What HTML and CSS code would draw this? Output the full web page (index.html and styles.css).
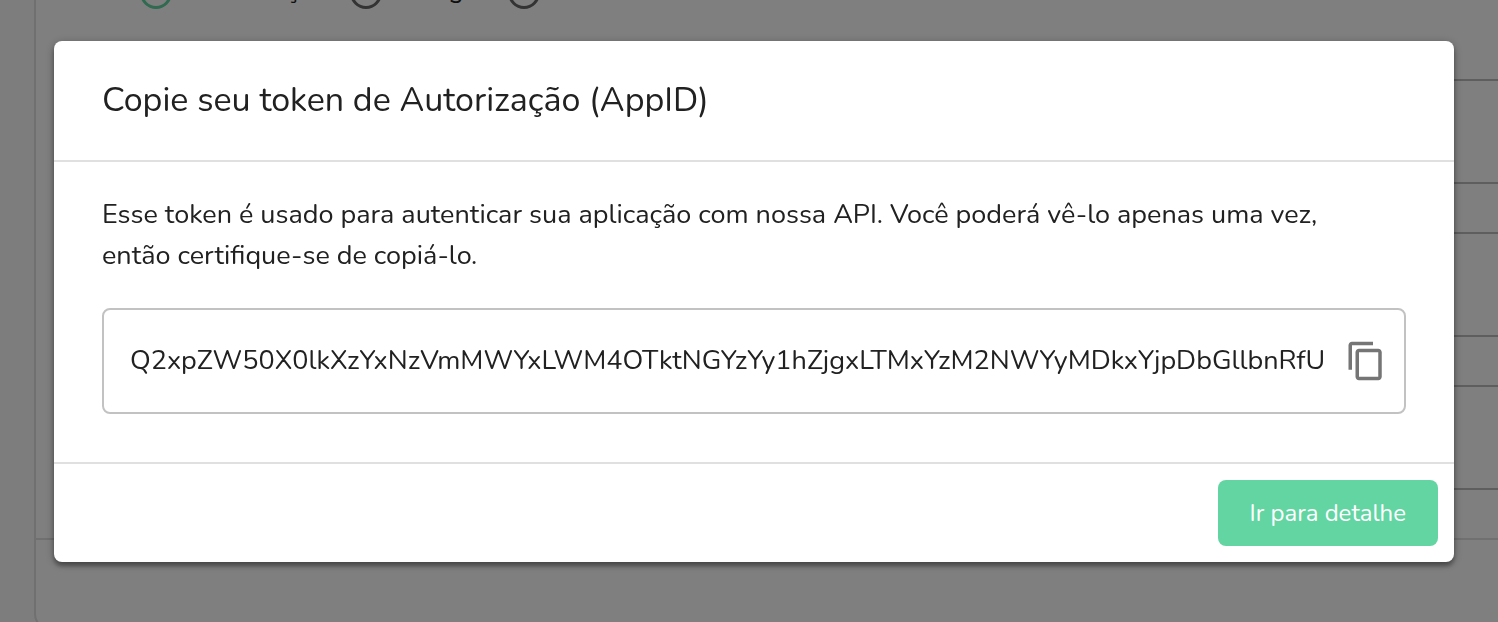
FILE: index.html
```html
<!DOCTYPE html>
<html lang="pt-BR">
<head>
<meta charset="utf-8">
<title>Token de Autorização</title>
<link rel="stylesheet" href="styles.css">
</head>
<body>
<main class="page">
  <section class="panel">
    <div class="environments">
      <label class="option"><input class="radio" type="radio" name="env" checked>Autorização</label>
      <label class="option"><input class="radio" type="radio" name="env">Estágio</label>
      <label class="option"><input class="radio" type="radio" name="env">Produto</label>
    </div>
    <div class="fields">
      <div class="field field-tall"></div>
      <div class="field field-short"></div>
      <div class="field field-tall"></div>
      <div class="field field-short"></div>
      <div class="field field-tall"></div>
      <div class="field field-short"></div>
    </div>
    <div class="panel-footer"></div>
  </section>
</main>
<div class="overlay">
  <div class="dialog" role="dialog" aria-modal="true" aria-labelledby="dialog-title">
    <header class="dialog-header"><h1 class="dialog-title" id="dialog-title">Copie seu token de Autorização (AppID)</h1></header>
    <div class="dialog-body">
      <label class="description" for="token">Esse token é usado para autenticar sua aplicação com nossa API. Você poderá vê-lo apenas uma vez,<br>então certifique-se de copiá-lo.</label>
      <div class="token-box">
        <input class="token" id="token" type="text" readonly value="Q2xpZW50X0lkXzYxNzVmMWYxLWM4OTktNGYzYy1hZjgxLTMxYzM2NWYyMDkxYjpDbGllbnRfU">
        <button class="copy" type="button" aria-label="Copiar">
          <svg class="copy-icon" viewBox="0 0 24 24" aria-hidden="true"><path fill="currentColor" d="M16 1H4c-1.100 0-2 .9-2 2v14h2V3h12V1zm3 4H8c-1.100 0-2 .9-2 2v14c0 1.100.9 2 2 2h11c1.100 0 2-.9 2-2V7c0-1.100-.9-2-2-2zm0 16H8V7h11v14z"/></svg>
        </button>
      </div>
    </div>
    <footer class="dialog-footer"><button class="primary" type="button">Ir para detalhe</button></footer>
  </div>
</div>
</body>
</html>
```
FILE: styles.css
```css
* { box-sizing: border-box; }
body {
  margin: 0;
  background: #fafafa;
  color: #212121;
  font-family: Nunito, "Open Sans", sans-serif;
  font-size: 27px;
}
.page { height: 100vh; overflow: hidden; padding-left: 34px; }
.panel {
  display: flex;
  flex-direction: column;
  height: calc(100vh + 8px);
  border: 2px solid #e0e0e0;
  border-width: 0 0 2px 2px;
  border-radius: 0 0 0 16px;
  background: #fff;
}
.environments { display: flex; gap: 24px; padding-left: 104px; height: 79px; overflow: hidden; }
.option {
  display: flex;
  align-items: flex-start;
  gap: 16px;
  height: 32px;
  margin-top: -23px;
  font-size: 26px;
  line-height: 26px;
}
.radio {
  appearance: none;
  width: 32px;
  height: 32px;
  margin: 0;
  border: 3px solid #666;
  border-radius: 50%;
}
.radio:checked { border-color: #60d4a0; }
.fields { padding-left: 48px; }
.field { border-top: 2px solid #bdbdbd; }
.field-tall { height: 103px; }
.field-short { height: 50px; }
.panel-footer { flex: 1; border-top: 2px solid #e0e0e0; }
.overlay {
  position: fixed;
  inset: 0;
  padding: 41px 44px 40px 54px;
  background: rgba(0, 0, 0, .5);
}
.dialog {
  overflow: hidden;
  border-radius: 8px;
  background: #fff;
  box-shadow: 0 2px 10px rgba(0, 0, 0, .3), 0 4px 4px rgba(0, 0, 0, .3);
}
.dialog-header { padding: 34px 48px; border-bottom: 2px solid #e0e0e0; }
.dialog-title { margin: 0; font-size: 34px; font-weight: 400; line-height: 51px; }
.dialog-body { padding: 32px 48px 48px; }
.description { display: block; line-height: 41px; }
.token-box {
  display: flex;
  align-items: center;
  height: 106px;
  margin-top: 32px;
  padding: 0 17px 0 26px;
  border: 2px solid #c2c2c2;
  border-radius: 8px;
}
.token {
  flex: 1;
  min-width: 0;
  padding: 0;
  border: 0;
  outline: 0;
  background: none;
  color: inherit;
  font: inherit;
  line-height: 40px;
}
.copy {
  display: flex;
  margin-left: 14px;
  padding: 0;
  border: 0;
  background: none;
  color: #757575;
}
.copy-icon { width: 42px; height: 42px; }
.dialog-footer { display: flex; justify-content: flex-end; padding: 16px; border-top: 2px solid #e0e0e0; }
.primary {
  padding: 0 32px;
  border: 0;
  border-radius: 8px;
  background: #62d5a2;
  color: #fff;
  font: inherit;
  font-size: 24px;
  line-height: 66px;
}
```
